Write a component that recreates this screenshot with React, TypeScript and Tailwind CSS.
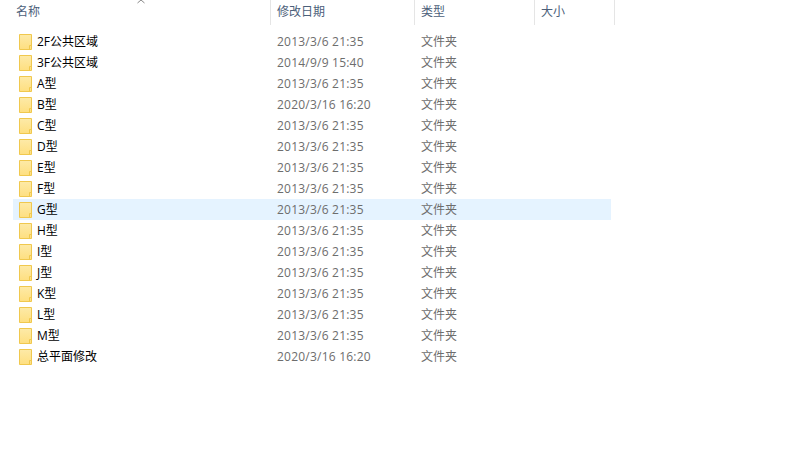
const rows: [string, string][] = [
  ["2F公共区域", "2013/3/6 21:35"],
  ["3F公共区域", "2014/9/9 15:40"],
  ["A型", "2013/3/6 21:35"],
  ["B型", "2020/3/16 16:20"],
  ["C型", "2013/3/6 21:35"],
  ["D型", "2013/3/6 21:35"],
  ["E型", "2013/3/6 21:35"],
  ["F型", "2013/3/6 21:35"],
  ["G型", "2013/3/6 21:35"],
  ["H型", "2013/3/6 21:35"],
  ["I型", "2013/3/6 21:35"],
  ["J型", "2013/3/6 21:35"],
  ["K型", "2013/3/6 21:35"],
  ["L型", "2013/3/6 21:35"],
  ["M型", "2013/3/6 21:35"],
  ["总平面修改", "2020/3/16 16:20"],
];

function Folder() {
  return (
    <svg width="13" height="16" viewBox="0 0 13 16" className="shrink-0">
      <defs>
        <linearGradient id="folderFill" x1="0" y1="0" x2="0" y2="1">
          <stop offset="0" stopColor="#fdeaa8" />
          <stop offset="1" stopColor="#fedf80" />
        </linearGradient>
      </defs>
      <path d="M0.5 0.5H12.5V15.5H0.5Z" fill="url(#folderFill)" stroke="#f0c84e" />
      <path d="M10.5 15V11.5H12.5" fill="none" stroke="#f0c84e" />
    </svg>
  );
}

export default function App() {
  return (
    <div className="relative w-[789px] h-[456px] overflow-hidden bg-white text-[12px] leading-[21px] font-['Open_Sans','Noto_Sans_CJK_SC',sans-serif]">
      <svg width="9" height="4" viewBox="0 0 9 4" className="absolute left-[137px] top-0">
        <path d="M0.5 3L4 0L7.5 3" fill="none" stroke="#8a8a8a" />
      </svg>
      <div className="flex h-[25px] text-[#4c607a] w-[615px]">
        <div className="w-[271px] pl-4 border-r border-[#e5e5e5] leading-[23px]">名称</div>
        <div className="w-[144px] pl-[6px] border-r border-[#e5e5e5] leading-[23px]">修改日期</div>
        <div className="w-[120px] pl-[6px] border-r border-[#e5e5e5] leading-[23px]">类型</div>
        <div className="w-[80px] pl-[6px] border-r border-[#e5e5e5] leading-[23px]">大小</div>
      </div>
      <div className="mt-[6px] ml-[13px] w-[598px] flex flex-col">
        {rows.map(([name, date]) => (
          <div
            key={name}
            className={`flex items-center h-[21px] ${name === "G型" ? "bg-[#e5f3ff]" : ""}`}
          >
            <div className="w-[258px] flex items-center pl-[6px] gap-[5px] text-black whitespace-nowrap">
              <Folder />
              <span>{name}</span>
            </div>
            <div className="w-[144px] pl-[6px] tracking-[0.22px] text-[#6d6d6d]">{date}</div>
            <div className="pl-[6px] text-[#6d6d6d]">文件夹</div>
          </div>
        ))}
      </div>
    </div>
  );
}
